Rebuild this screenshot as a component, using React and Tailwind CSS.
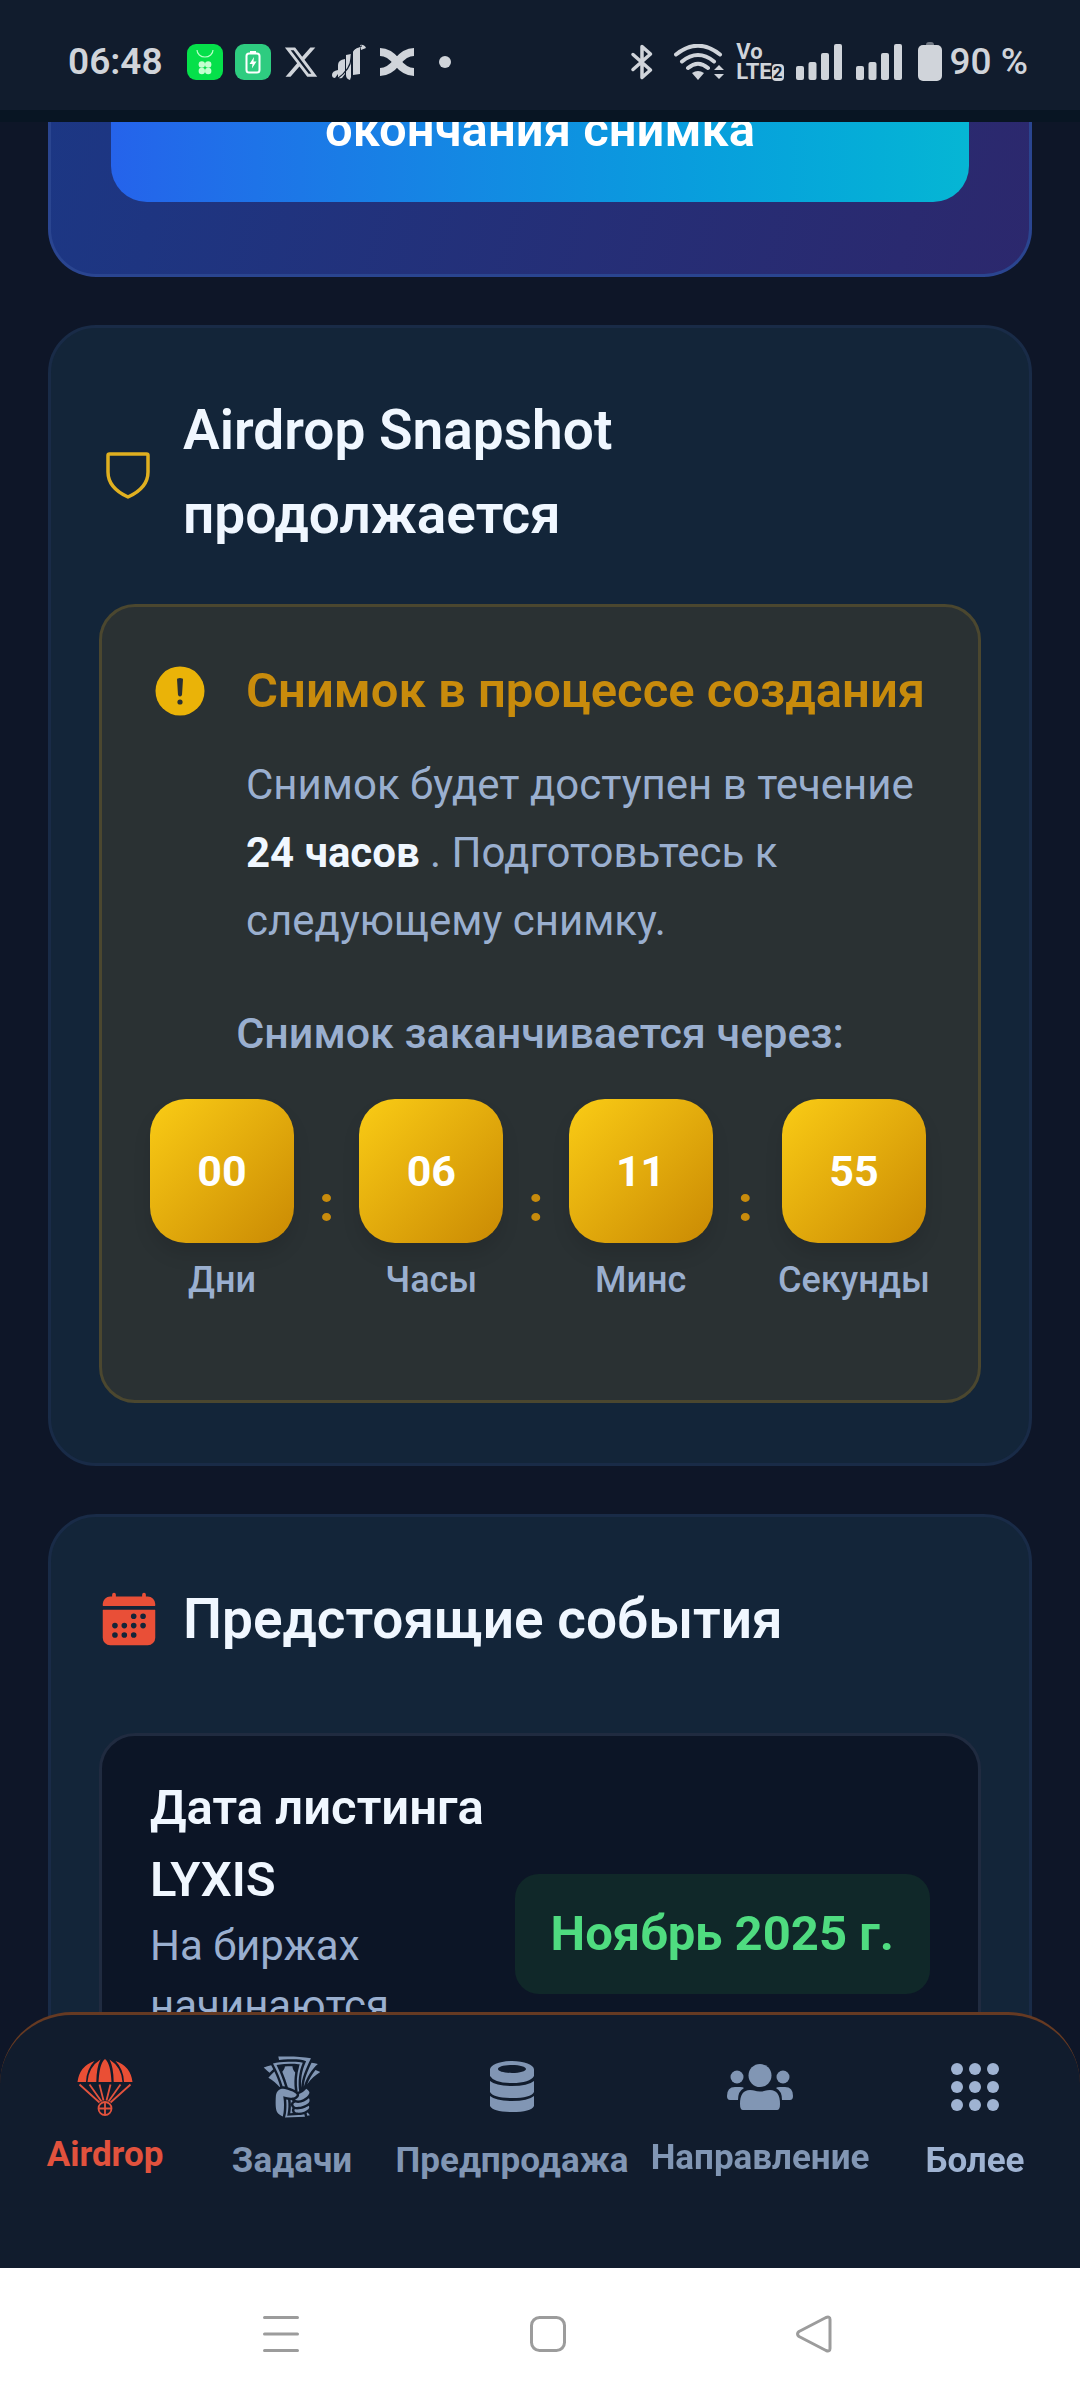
import React from "react";
import { FaXTwitter } from "react-icons/fa6";
import { IoCalendar } from "react-icons/io5";
import { GiTakeMyMoney } from "react-icons/gi";

const countdown = [
  { value: "00", label: "Дни" },
  { value: "06", label: "Часы" },
  { value: "11", label: "Минс" },
  { value: "55", label: "Секунды" },
];

const SignalBars = () => (
  <svg className="h-9 w-[46px]" viewBox="0 0 46 36" fill="currentColor">
    <rect x="0" y="22" width="8" height="14" rx="2" />
    <rect x="12.500" y="18" width="8" height="18" rx="2" />
    <rect x="25" y="9" width="8" height="27" rx="2" />
    <rect x="38" y="0" width="8" height="36" rx="2" />
  </svg>
);

const StatusBar = () => (
  <div className="flex h-[110px] shrink-0 items-center justify-between bg-[#111c2d] pt-[14px] pr-[52px] pl-[68px] font-['Roboto',sans-serif] text-[#d0d4da]">
    <div className="flex items-center">
      <span className="text-[37px] leading-[42px] font-semibold">06:48</span>
      {/* Notification icons */}
      <svg className="ml-6 h-9 w-9" viewBox="0 0 36 36">
        <rect width="36" height="36" rx="9" fill="#05e04a" />
        <path d="M10 6a8 7 0 0 0 16 0" fill="none" stroke="#b8ffc8" strokeWidth="1.200" />
        <g fill="#c4ffd0">
          <circle cx="14.800" cy="20.500" r="3.200" />
          <circle cx="21.200" cy="20.500" r="3.200" />
          <circle cx="14.800" cy="27" r="3.200" />
          <circle cx="21.200" cy="27" r="3.200" />
        </g>
      </svg>
      <svg className="ml-3 h-9 w-9" viewBox="0 0 36 36">
        <rect width="36" height="36" rx="9" fill="#2ecc80" />
        <rect x="11.500" y="9.500" width="13" height="19" rx="2.500" fill="none" stroke="#fff" strokeWidth="2" />
        <rect x="15" y="7" width="6" height="3" fill="#fff" />
        <path d="M19 13l-4.500 7h3l-.6 4.500 4.600-7h-3z" fill="#fff" />
      </svg>
      <FaXTwitter className="ml-3 h-9 w-9" />
      <svg className="ml-3 h-9 w-9" viewBox="0 0 36 36" fill="currentColor">
        <path d="M1 31q0-4 6-5v4l-3 4q-3 0-3-3z" />
        <path d="M7 21q0-5 7-6v15l-3 4q-4 1-4-1z" />
        <path d="M15 11l5-1v23l-1 3q-4-1-4-5z" />
        <path d="M22 7q2-3 7-4v27l-7 1z" />
        <path d="M29 1q4-1 6 3l-5 2z" />
        <path d="M6 35Q20 25 20 14T31 2" fill="none" stroke="#111c2d" strokeWidth="1.200" />
      </svg>
      <svg className="ml-3 h-9 w-9" viewBox="0 0 36 36" fill="none" stroke="currentColor" strokeWidth="8">
        <path d="M1 8q9 0 17 10t17 10M1 28q9 0 17-10T35 8" />
      </svg>
      <span className="ml-6 h-3 w-3 rounded-full bg-[#d0d4da]" />
    </div>

    <div className="flex items-center">
      <svg className="h-9 w-6" viewBox="0 0 24 36" fill="none" stroke="currentColor" strokeWidth="3.500" strokeLinecap="round" strokeLinejoin="round">
        <path d="M3 10.500L20.500 26 12 33.500v-31l8.500 7.500L3 25.500" />
      </svg>
      <svg className="ml-5 h-9 w-[50px]" viewBox="0 0 50 36" fill="none" stroke="currentColor" strokeWidth="4" strokeLinecap="round">
        <path d="M2 10.500Q24-7 46 10.500M8 17.500q16-13 32 0M14 24q10-8.500 20 0" />
        <path d="M18 29q6-4 12 0l-6 7z" fill="currentColor" stroke="none" />
        <path d="M40 26l5-5 5 5zM40 30l5 5 5-5z" fill="currentColor" stroke="none" />
      </svg>
      <div className="ml-3 flex flex-col text-[22px] leading-5 font-bold">
        <span>Vo</span>
        <span className="flex items-center">
          LTE
          <span className="rounded-sm bg-[#d0d4da] px-px text-[17px] leading-[17px] text-[#111c2d]">2</span>
        </span>
      </div>
      <div className="ml-3 flex gap-[14px]">
        <SignalBars />
        <SignalBars />
      </div>
      <svg className="ml-4 h-10 w-6" viewBox="0 0 24 40" fill="currentColor">
        <rect x="8" y="0" width="8" height="6" rx="3" opacity=".5" />
        <rect x="0" y="3" width="24" height="36" rx="5" />
      </svg>
      <span className="ml-2 text-[37px] leading-[42px] font-medium">90 %</span>
    </div>
  </div>
);

const SnapshotCard = () => (
  <section className="rounded-[48px] border-[3px] border-[#192b47] bg-[#132539] px-12 py-[60px]">
    <div className="flex items-center gap-6">
      <svg className="h-[60px] w-[60px] shrink-0" viewBox="0 0 60 60" fill="none" stroke="#e0b020" strokeWidth="3.500" strokeLinejoin="round">
        <path d="M10.500 12h37q1.500 0 1.500 1.500V30q0 16-20 25Q9 46 9 30V13.500Q9 12 10.500 12z" />
      </svg>
      <h2 className="text-[55px] leading-[84px] font-semibold text-[#f0f7ff]">
        Airdrop Snapshot
        <br />
        продолжается
      </h2>
    </div>

    <div className="mt-12 rounded-[36px] border-[3px] border-[#4b472f] bg-[#2a3133] px-12 pt-12 pb-[93px]">
      <div className="flex gap-9">
        <svg className="mt-[6px] h-[60px] w-[60px] shrink-0" viewBox="0 0 60 60">
          <circle cx="30" cy="30" r="24.500" fill="#eab308" />
          <path d="M27 18.500q0-1.500 3-1.500t3 1.500l-1 15q-.3 2-2 2t-2-2z" fill="#2a3133" />
          <circle cx="30" cy="41" r="2.600" fill="#2a3133" />
        </svg>
        <div className="-mr-6">
          <h3 className="text-[49px] leading-[72px] font-semibold text-[#c88b0c]">
            Снимок в процессе создания
          </h3>
          <p className="mt-6 text-[42px] leading-[68px] text-[#9aafcf]">
            Снимок будет доступен в течение{" "}
            <strong className="font-bold text-[#f0f7ff]">24 часов</strong> . Подготовьтесь к следующему
            снимку.
          </p>
        </div>
      </div>

      <p className="mt-12 text-center text-[43px] leading-[60px] font-medium text-[#9aafcf]">
        Снимок заканчивается через:
      </p>

      {/* Countdown */}
      <div className="mt-9 flex items-center justify-center gap-6">
        {countdown.map((item, index) => (
          <React.Fragment key={item.label}>
            {index > 0 && (
              <span className="w-[18px] pt-1 text-center text-[49px] leading-[72px] font-black text-[#c88b0c]">
                :
              </span>
            )}
            <div className="flex flex-col items-center gap-[10px]">
              <div className="flex h-36 w-36 items-center justify-center rounded-[36px] bg-linear-to-br from-[#facc15] to-[#ca8a04] text-[43px] font-bold text-white shadow-[0_12px_18px_rgba(0,0,0,0.1)]">
                {item.value}
              </div>
              <span className="text-[36px] leading-[54px] font-medium text-[#9aafcf]">{item.label}</span>
            </div>
          </React.Fragment>
        ))}
      </div>
    </div>
  </section>
);

const EventsCard = () => (
  <section className="rounded-[48px] border-[3px] border-[#192b47] bg-[#132539] px-12 py-[60px]">
    <div className="flex items-center gap-6">
      <IoCalendar className="h-[60px] w-[60px] shrink-0 text-[#e94f37]" />
      <h2 className="text-[55px] leading-[84px] font-semibold text-[#f0f7ff]">Предстоящие события</h2>
    </div>

    <div className="mt-[72px] flex items-center justify-between rounded-[36px] border-[3px] border-[#202b40] bg-[#0c1526] px-12 py-9">
      <div className="pb-[60px]">
        <h3 className="text-[49px] leading-[72px] font-semibold text-[#f0f7ff]">
          Дата листинга
          <br />
          LYXIS
        </h3>
        <p className="text-[42px] leading-[60px] text-[#9aafcf]">
          На биржах
          <br />
          начинаются
        </p>
      </div>
      <span className="rounded-3xl bg-[#102829] px-9 py-6 text-[49px] leading-[72px] font-bold whitespace-nowrap text-[#4fdc80]">
        Ноябрь 2025 г.
      </span>
    </div>
  </section>
);

const BottomNav = () => (
  <nav className="grid grid-cols-[210fr_164fr_276fr_220fr_210fr] rounded-t-[72px] border-t-[3px] border-[#663a22] bg-[#111c2d] pt-10 pb-[89px] text-[35px] leading-9 font-bold text-[#8196b4]">
    <a href="#airdrop" className="flex flex-col items-center gap-[18px] text-[#e2523d]">
      <svg className="h-16 w-16" viewBox="-4.500 -4 64 64">
        <g fill="#ea4f35">
          <path d="M0 23Q2 7 17 2 9 10 8.500 23zM10 23Q11 8 23 .5 19 8 18.800 23zM21 23Q22 4 27.500 0 33 4 34 23zM36.200 23Q36 8 32 .5 44 8 45 23zM46.500 23Q46 10 38 2 53 7 55 23z" />
        </g>
        <g fill="none" stroke="#e2523d" strokeWidth="1.800">
          <path d="M2 25.500l20 18M12 25.500l12 17M22 25.500l4 16M33 25.500l-4 16M43 25.500l-12 17M53 25.500L33 43.500" />
          <circle cx="27.500" cy="49.500" r="6.500" />
          <path d="M27.500 43v13M21 49.500h13" />
        </g>
      </svg>
      Airdrop
    </a>
    <a href="#tasks" className="flex flex-col items-center gap-6">
      <svg className="h-16 w-16 overflow-visible" viewBox="0 0 64 64">
        <GiTakeMyMoney x="-3" y="-3" size="70" />
      </svg>
      Задачи
    </a>
    <a href="#presale" className="flex flex-col items-center gap-6">
      <svg className="h-16 w-16" viewBox="-10 -6 64 64" fill="currentColor">
        <path d="M22 0C34 0 44 4 44 8.500V15Q40 22 22 22T0 15V8.500C0 4 10 0 22 0zM22 4C14 4 8 5.800 8 8s6 4 14 4 14-1.800 14-4-6-4-14-4z" fillRule="evenodd" />
        <path d="M0 20q6 5 22 5t22-5v11q-3 6-22 6T0 31z" />
        <path d="M0 35q6 5 22 5t22-5v10q-3 6-22 6T0 45z" />
      </svg>
      Предпродажа
    </a>
    <a href="#referral" className="flex flex-col items-center gap-[21px]">
      <svg className="h-16 w-[66px]" viewBox="0 -9 66 64" fill="currentColor">
        <circle cx="33" cy="11.500" r="11.500" />
        <circle cx="10" cy="13" r="6.500" />
        <circle cx="56" cy="13" r="6.500" />
        <path d="M0 32q0-9 8-9h5q3 0 4 1-6 3-6 12H3q-3 0-3-4zM66 32q0-9-8-9h-5q-3 0-4 1 6 3 6 12h8q3 0 3-4z" />
        <path d="M23 26q3 0 4 .6 6 2 12 0 1-.6 4-.6 10 0 10 14 0 6-3 6H16q-3 0-3-6 0-14 10-14z" />
      </svg>
      Направление
    </a>
    <a href="#more" className="flex flex-col items-center gap-6 text-[#9fb3d2]">
      <svg className="h-16 w-16" viewBox="-8 -8 64 64" fill="currentColor">
        {[6, 24, 42].map((y) => [6, 24, 42].map((x) => <circle key={`${x}-${y}`} cx={x} cy={y} r="6" />))}
      </svg>
      Более
    </a>
  </nav>
);

const SystemBar = () => (
  <div className="flex h-[132px] items-center justify-between bg-white pr-[246px] pl-[261px] text-[#9c9c9c]">
    <button type="button" aria-label="Меню">
      <svg className="h-10 w-10" viewBox="0 0 40 40" stroke="currentColor" strokeWidth="3" strokeLinecap="round">
        <path d="M3.500 3.500h33M3.500 20h33M3.500 36.500h33" />
      </svg>
    </button>
    <button type="button" aria-label="Домой">
      <svg className="h-10 w-10" viewBox="0 0 40 40" fill="none" stroke="currentColor" strokeWidth="3">
        <rect x="3.500" y="3.500" width="33" height="33" rx="8" />
      </svg>
    </button>
    <button type="button" aria-label="Назад">
      <svg className="h-10 w-10" viewBox="0 0 40 40" fill="none" stroke="currentColor" strokeWidth="3" strokeLinejoin="round">
        <path d="M5 17.500L32 3.500q4-1.500 4 2v29q0 3.500-4 2L5 22.500q-3-2.500 0-5z" />
      </svg>
    </button>
  </div>
);

const App = () => {
  return (
    <div className="flex h-screen flex-col overflow-hidden bg-[#0e1628] font-['Roboto',sans-serif]">
      <StatusBar />
      <div className="h-3 shrink-0 bg-[#081523]" />

      <main className="min-h-0 flex-1 overflow-hidden px-12">
        <div className="-mt-7 flex flex-col gap-12">
          {/* The end of the hero card, scrolled under the header */}
          <section className="rounded-b-[48px] border-[3px] border-t-0 border-[#2a4590] bg-linear-[105deg] from-[#1c3784] to-[#2c286d] px-[60px] pb-[72px]">
            <button
              type="button"
              className="w-full rounded-b-[36px] bg-linear-to-r from-[#2563eb] to-[#06b6d4] pb-9 text-center text-[49px] leading-[72px] font-semibold text-white"
            >
              окончания снимка
            </button>
          </section>
          <SnapshotCard />
          <EventsCard />
        </div>
      </main>

      <footer className="fixed inset-x-0 bottom-0">
        <BottomNav />
        <SystemBar />
      </footer>
    </div>
  );
};

export default App;
